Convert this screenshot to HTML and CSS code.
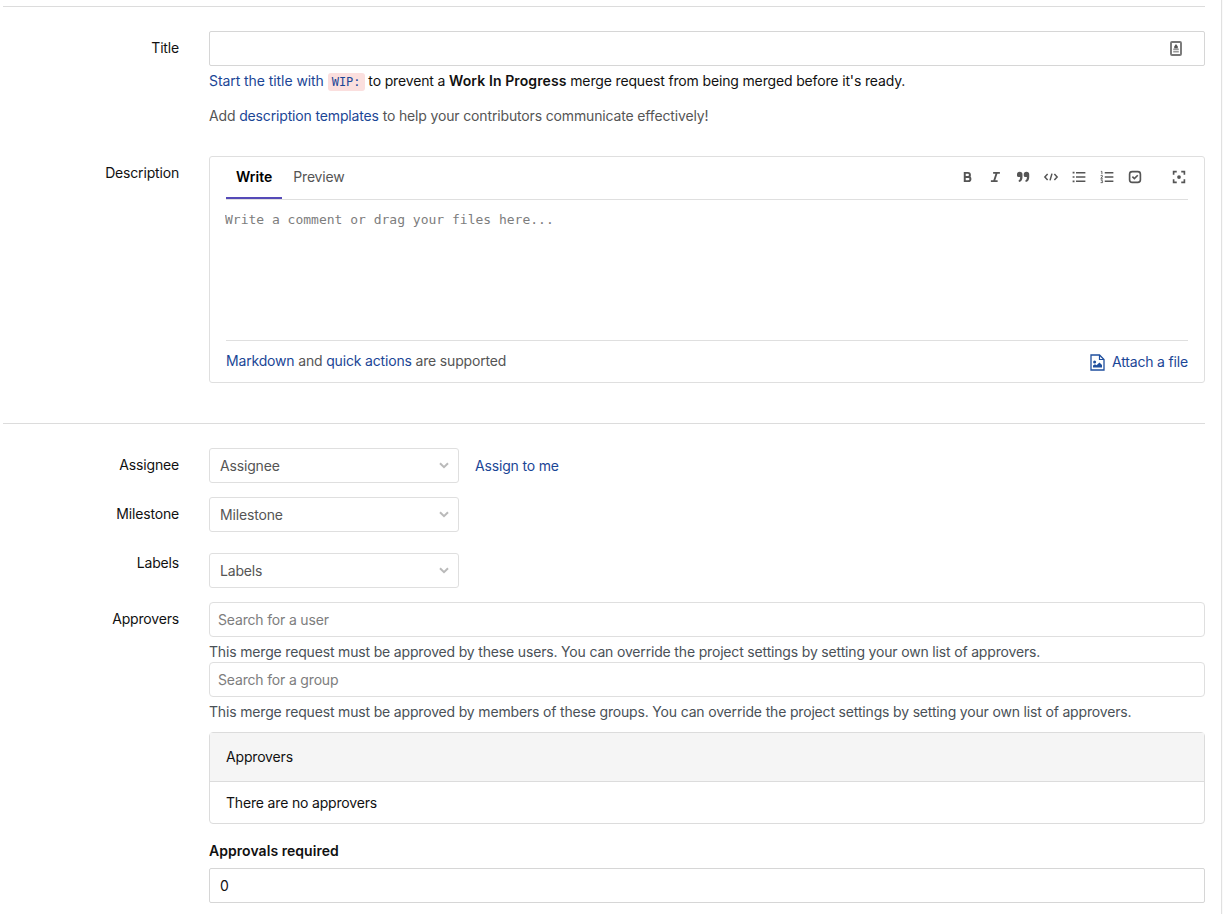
FILE: index.html
```
<!DOCTYPE html>
<html lang="en">
<head>
  <meta charset="UTF-8">
  <title>New Merge Request</title>
  <meta name="viewport" content="width=device-width, initial-scale=1">
  <link rel="stylesheet" href="styles.css">
</head>
<body>

<main class="content">
  <form class="merge-request-form">

    <section class="form-section">
      <div class="form-row row-title">
        <label class="form-label" for="title">Title</label>
        <div class="form-field">
          <div class="title-box">
            <input type="text" id="title" class="form-control">
            <svg class="autofill-icon" width="12" height="15" viewBox="0 0 12 15">
              <rect x="1" y="1" width="10" height="13" rx="1" fill="#fff" stroke="#777" stroke-width="1.9"/>
              <path d="M6 3L7.800 5.600V7.600H4.200V5.600z" fill="#555"/>
              <path d="M3.200 8.400h5.600M3.200 10.700h5.600" stroke="#999" stroke-width="1.600"/>
            </svg>
          </div>
          <p class="wip-help"><a href="#">Start the title with <code>WIP:</code></a> to prevent a <strong>Work In Progress</strong> merge request from being merged before it's ready.</p>
          <p class="template-help">Add <a href="#">description templates</a> to help your contributors communicate effectively!</p>
        </div>
      </div>

      <div class="form-row">
        <label class="form-label" for="description">Description</label>
        <div class="form-field">
          <div class="editor">
            <div class="editor-header">
              <ul class="tabs">
                <li class="tab active">Write</li>
                <li class="tab">Preview</li>
              </ul>
              <div class="toolbar">
                <svg viewBox="0 0 16 16"><path d="M5 2.500h4.200a2.700 2.700 0 0 1 0 5.400H5zM5 7.900h4.800a2.800 2.800 0 0 1 0 5.600H5zV2.500" fill="none" stroke="#555" stroke-width="2.600"/></svg>
                <svg viewBox="0 0 16 16"><path d="M5.500 2.500h9M2.500 13.500h9M10.300 2.500L6.700 13.500" fill="none" stroke="#555" stroke-width="2.400"/></svg>
                <svg viewBox="0 0 16 16"><path d="M0 4.500a3.600 3.600 0 0 1 7.300 0v3.700c0 3.600-1.600 5.800-4.600 6.600l-.7-2C3.700 11.800 4.200 10.700 4.200 8H2A2 2 0 0 1 0 6.200zM9 4.500a3.600 3.600 0 0 1 7.300 0v3.700c0 3.600-1.600 5.800-4.600 6.600l-.7-2c1.700-1 2.200-2.100 2.200-4.800H11A2 2 0 0 1 9 6.200z" fill="#555"/></svg>
                <svg viewBox="0 0 16 16"><path d="M3.500 4L-.2 8l3.700 4M12.500 4l3.700 4-3.700 4M9.300 3.500L6.700 12.500" fill="none" stroke="#555" stroke-width="2"/></svg>
                <svg viewBox="0 0 16 16"><path d="M4 2.200h12.500M4 8h12.500M4 13.800h12.500" stroke="#555" stroke-width="2"/><path d="M-.5 2.200h2.500M-.5 8h2.500M-.5 13.800h2.500" stroke="#555" stroke-width="2.200"/></svg>
                <svg viewBox="0 0 16 16"><path d="M5 2.200h11.500M5 8h11.500M5 13.800h11.500" stroke="#555" stroke-width="2"/><path d="M-.2.500h1.400v3.800M-.5 6.200h2.400v1.400L-.3 9.700h2.700M-.5 11.800h2.400l-1 1.600 1.200.4v1.700h-2.600" fill="none" stroke="#555" stroke-width="1.200"/></svg>
                <svg viewBox="0 0 16 16"><rect x=".8" y=".8" width="14.400" height="14.400" rx="3.500" fill="none" stroke="#555" stroke-width="2.200"/><path d="M4.500 7.500l2.700 2.700 4.500-4.500" fill="none" stroke="#555" stroke-width="2.200"/></svg>
                <svg class="fullscreen" viewBox="0 0 16 16"><path d="M.8 5V.8H5M11 .8h4.200V5M15.200 11v4.200H11M5 15.200H.8V11" fill="none" stroke="#555" stroke-width="2.200"/><circle cx="8" cy="8" r="2.500" fill="#555"/></svg>
              </div>
            </div>
            <textarea id="description" placeholder="Write a comment or drag your files here..."></textarea>
            <div class="editor-footer">
              <span class="supported"><a href="#">Markdown</a> and <a href="#">quick actions</a> are supported</span>
              <a href="#" class="attach">
                <svg width="15" height="17" viewBox="0 0 15 17">
                  <path d="M1 1h8.500L14 5.500V16H1z" fill="none" stroke="#1f4f9e" stroke-width="1.300"/>
                  <path d="M9.500 1v4.500H14" fill="none" stroke="#1f4f9e" stroke-width="1.200"/>
                  <path d="M3 13.500v-2l2-1.200 1.500.9L9.500 8.500l2.500 2.500v2.500z" fill="#1f4f9e"/>
                  <circle cx="4.600" cy="8" r="1.500" fill="#1f4f9e"/>
                </svg>
                <span>Attach a file</span>
              </a>
            </div>
          </div>
        </div>
      </div>
    </section>

    <section class="form-section">
      <div class="form-row row-select">
        <label class="form-label">Assignee</label>
        <div class="form-field inline">
          <button type="button" class="dropdown">Assignee <svg viewBox="0 0 10 7"><path d="M1 1.200l4 4 4-4"/></svg></button>
          <a href="#" class="assign-me">Assign to me</a>
        </div>
      </div>
      <div class="form-row row-select">
        <label class="form-label">Milestone</label>
        <div class="form-field">
          <button type="button" class="dropdown">Milestone <svg viewBox="0 0 10 7"><path d="M1 1.200l4 4 4-4"/></svg></button>
        </div>
      </div>
      <div class="form-row row-select">
        <label class="form-label">Labels</label>
        <div class="form-field labels">
          <button type="button" class="dropdown">Labels <svg viewBox="0 0 10 7"><path d="M1 1.200l4 4 4-4"/></svg></button>
        </div>
      </div>
      <div class="form-row">
        <label class="form-label">Approvers</label>
        <div class="form-field">
          <input type="text" class="form-control search" placeholder="Search for a user">
          <p class="help">This merge request must be approved by these users. You can override the project settings by setting your own list of approvers.</p>
          <input type="text" class="form-control search" placeholder="Search for a group">
          <p class="help">This merge request must be approved by members of these groups. You can override the project settings by setting your own list of approvers.</p>
          <div class="card">
            <div class="card-header">Approvers</div>
            <div class="card-body">There are no approvers</div>
          </div>
          <label class="approvals-label" for="approvals">Approvals required</label>
          <input type="text" id="approvals" class="form-control" value="0">
        </div>
      </div>
    </section>

  </form>
</main>

</body>
</html>
```
FILE: styles.css
```
* {
  box-sizing: border-box;
}

body {
  margin: 0;
  background: #fafafa;
  color: #111;
  font-family: Inter, "Liberation Sans", sans-serif;
  font-size: 14px;
  line-height: 20px;
  letter-spacing: -0.17px;
  overflow: hidden;
}

a {
  color: #1b4696;
  text-decoration: none;
}

p {
  margin: 0;
}

.content {
  width: 1222px;
  height: 914px;
  padding: 6px 16px 0 3px;
  background: #fff;
  border-right: 1px solid #e1e1e1;
  overflow: hidden;
}

.form-section {
  border-top: 1px solid #dcdcdc;
  padding-top: 24px;
}

.form-row {
  display: flex;
  gap: 30px;
}

.form-label {
  width: 176px;
  padding-top: 7px;
  text-align: right;
}

.form-field {
  width: 996px;
}

.form-control {
  display: block;
  width: 100%;
  height: 35px;
  padding: 0 10px;
  border: 1px solid #d6d6d6;
  border-radius: 2px;
  background: #fff;
  color: #111;
  font: inherit;
  letter-spacing: inherit;
}

.title-box {
  position: relative;
}

.autofill-icon {
  position: absolute;
  top: 10px;
  right: 23px;
}

.wip-help {
  margin-top: 5px;
  letter-spacing: -0.15px;
}

.wip-help a {
  letter-spacing: -0.07px;
}

.wip-help code {
  padding: 2px 4px;
  border-radius: 3px;
  background: #fbdfde;
  font-family: "DejaVu Sans Mono", monospace;
  font-size: 12px;
  letter-spacing: 0;
}

.wip-help strong {
  font-weight: 600;
  letter-spacing: 0.1px;
}

.template-help {
  margin-top: 15px;
  color: #555;
  letter-spacing: -0.15px;
}

.row-title {
  margin-bottom: 29px;
}

.row-title .template-help {
  margin-top: 14px;
  margin-bottom: 1px;
}

.editor {
  height: 227px;
  padding: 0 16px;
  border: 1px solid #dfdfdf;
  border-radius: 3px;
}

.editor-header {
  display: flex;
  justify-content: space-between;
  height: 43px;
  border-bottom: 1px solid #dfdfdf;
}

.tabs {
  display: flex;
  margin: 0;
  padding: 0;
  list-style: none;
}

.tab {
  height: 42px;
  padding: 10px 10px 0 11px;
  color: #555;
}

.tab.active {
  padding-left: 10px;
  border-bottom: 2px solid #554ab8;
  color: #000;
  font-weight: 600;
  letter-spacing: 0;
}

.toolbar {
  display: flex;
  align-items: center;
  gap: 16px;
  height: 40px;
  padding-right: 3px;
}

.toolbar svg {
  width: 12px;
  height: 12px;
  overflow: visible;
}

.toolbar .fullscreen {
  margin-left: 16px;
}

.editor textarea {
  display: block;
  width: 100%;
  height: 140px;
  margin-left: -1px;
  padding: 10px 0 0;
  border: 0;
  outline: 0;
  resize: none;
  font-family: "DejaVu Sans Mono", monospace;
  font-size: 13px;
  line-height: 20px;
}

::placeholder {
  color: #7d7d7d;
  opacity: 1;
}

.editor-footer {
  display: flex;
  justify-content: space-between;
  padding-top: 10px;
  border-top: 1px solid #dfdfdf;
  color: #555;
}

.attach {
  display: flex;
  align-items: center;
  gap: 7px;
  padding-top: 1px;
}

.form-section + .form-section {
  margin-top: 40px;
}

.row-select {
  margin-bottom: 14px;
}

.inline {
  display: flex;
  align-items: center;
  gap: 16px;
}

.dropdown {
  display: flex;
  align-items: center;
  justify-content: space-between;
  width: 250px;
  height: 35px;
  padding: 0 9px 0 10px;
  border: 1px solid #dfdfdf;
  border-radius: 3px;
  background: #fff;
  color: #555;
  font: inherit;
  letter-spacing: inherit;
}

.dropdown svg {
  width: 10px;
  height: 7px;
  fill: none;
  stroke: #bababa;
  stroke-width: 2;
}

.labels {
  padding-top: 7px;
}

.search {
  padding: 0 8px;
  border-color: #dfdfdf;
  border-radius: 4px;
}

.help {
  padding-top: 5px;
  color: #4a5157;
}

.card {
  margin-top: 10px;
  border: 1px solid #dcdcdc;
  border-radius: 4px;
}

.card-header {
  height: 49px;
  padding: 14px 16px;
  border-bottom: 1px solid #dcdcdc;
  background: #f5f5f5;
}

.card-body {
  height: 41px;
  padding: 11px 16px;
}

.approvals-label {
  display: block;
  margin: 17px 0 7px;
  font-weight: 600;
  letter-spacing: 0.05px;
}
```
